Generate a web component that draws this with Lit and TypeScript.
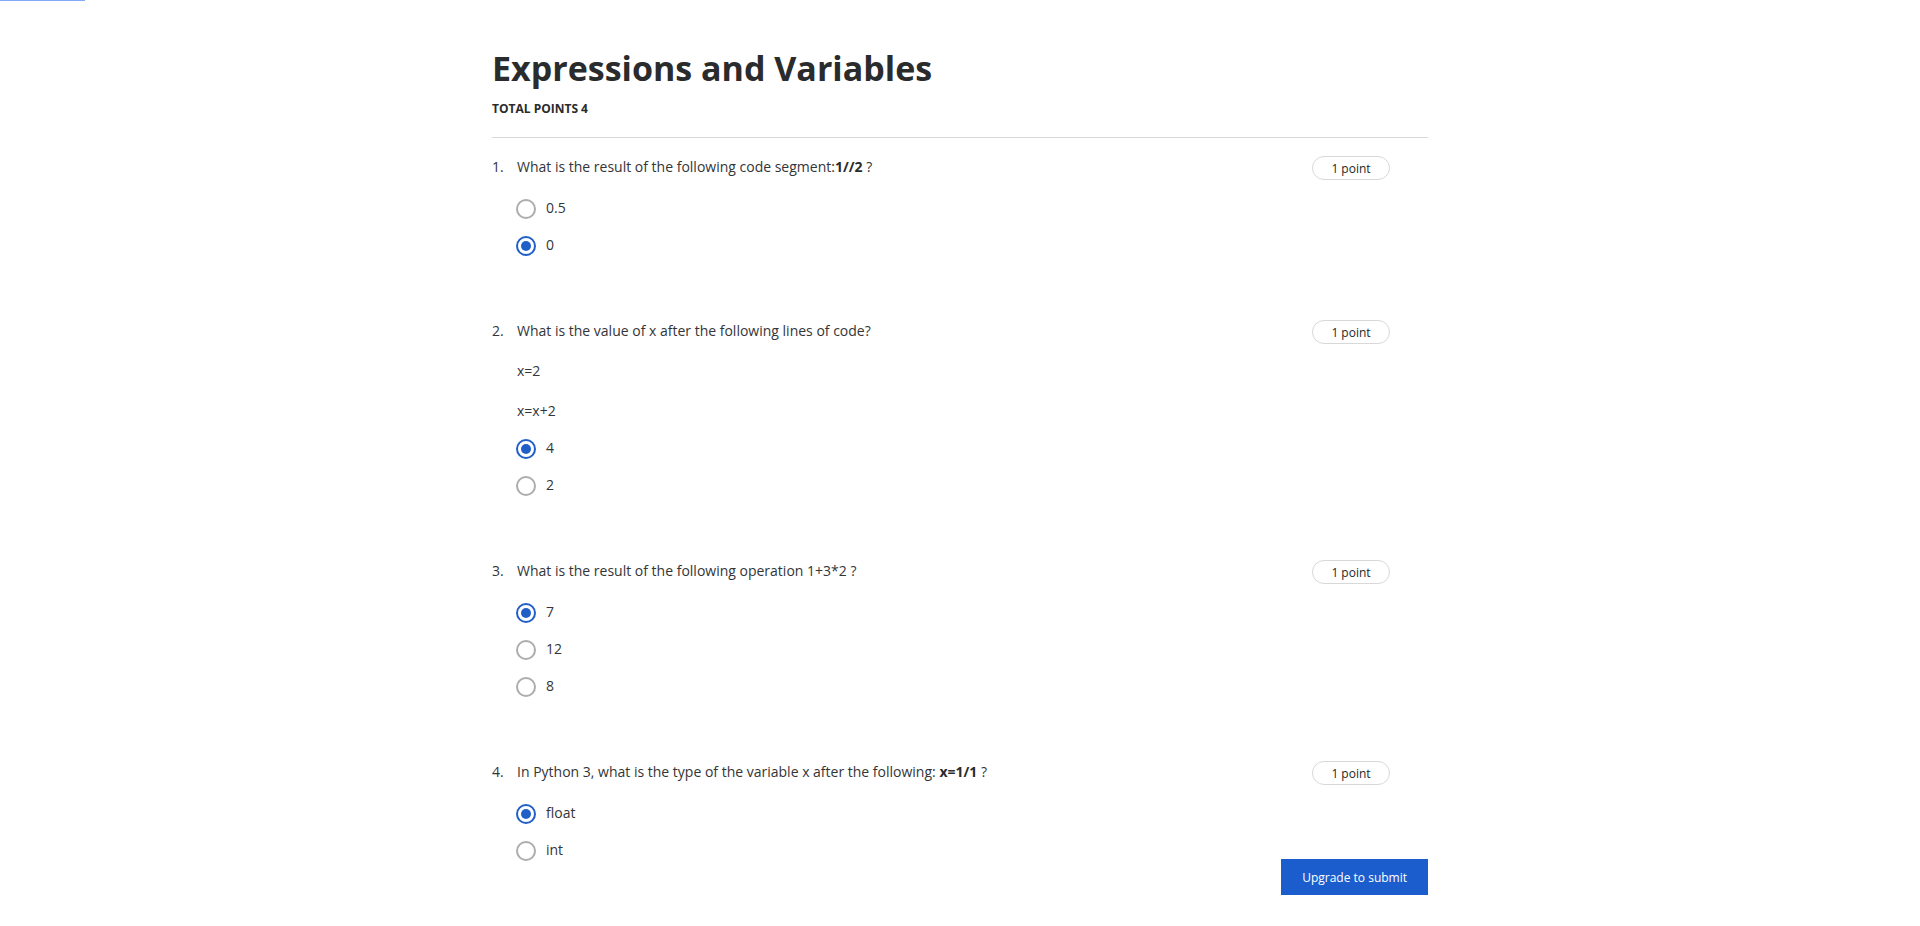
import { LitElement, html, css, TemplateResult } from "lit";
import { customElement, property, state } from "lit/decorators.js";
import { classMap } from "lit/directives/class-map.js";

interface Question {
  prompt: TemplateResult[];
  options: string[];
  selected: number;
}

@customElement("quiz-question")
class QuizQuestion extends LitElement {
  static styles = css`
    :host {
      display: block;
    }
    .question {
      display: grid;
      grid-template-columns: 24px minmax(0, 1fr) auto;
      padding: 0 38px 0 0;
      font-size: 14px;
      line-height: 22px;
      color: #333537;
    }
    .prompt {
      display: grid;
      gap: 18px;
      padding: 0 16px 0 1px;
    }
    .prompt p {
      margin: 0;
    }
    .prompt b {
      font-weight: 700;
      color: #2a2b2d;
    }
    .points {
      box-sizing: border-box;
      min-width: 78px;
      height: 24px;
      padding: 0 16px;
      border: 1px solid #d8d8d8;
      border-radius: 12px;
      font-size: 12px;
      line-height: 23px;
      text-align: center;
      color: #1f1f1f;
    }
    .options {
      grid-column: 2;
      display: grid;
      justify-items: start;
      gap: 17px;
      margin-top: 19px;
    }
    .options.compact {
      margin-top: 17px;
    }
    .option {
      display: flex;
      gap: 10px;
      line-height: 18px;
      cursor: pointer;
    }
    .radio {
      appearance: none;
      box-sizing: border-box;
      display: grid;
      place-content: center;
      width: 20px;
      height: 20px;
      margin: 0;
      border: 2px solid #adadad;
      border-radius: 50%;
      cursor: pointer;
    }
    .radio:checked {
      border-color: #205fc8;
    }
    .radio:checked::before {
      content: "";
      width: 10px;
      height: 10px;
      border-radius: 50%;
      background: #205fc8;
    }
  `;

  @property({ type: Number }) number = 1;
  @property({ attribute: false }) question!: Question;
  @state() private choice = -1;

  willUpdate() {
    if (this.choice < 0) this.choice = this.question.selected;
  }

  render() {
    const { prompt, options } = this.question;
    return html`
      <div class="question" role="radiogroup" aria-labelledby="prompt">
        <span>${this.number}.</span>
        <div class="prompt" id="prompt">${prompt.map((line) => html`<p>${line}</p>`)}</div>
        <span class="points">1 point</span>
        <div class=${classMap({ options: true, compact: prompt.length > 1 })}>
          ${options.map(
            (text, i) => html`
              <label class="option">
                <input
                  class="radio"
                  type="radio"
                  name="answer"
                  .checked=${this.choice === i}
                  @change=${() => (this.choice = i)}
                />
                <span>${text}</span>
              </label>
            `
          )}
        </div>
      </div>
    `;
  }
}

@customElement("app-root")
class AppRoot extends LitElement {
  static styles = css`
    :host {
      display: flex;
      flex-direction: column;
      min-height: 100vh;
      background: #fff;
      font-family: "Open Sans", "Noto Sans", sans-serif;
      color: #2a2b2d;
    }
    .progress {
      height: 1px;
    }
    .progress-fill {
      height: 100%;
      background: #86a8f8;
    }
    .page {
      flex: 1;
      display: grid;
      box-sizing: border-box;
      width: 100%;
      max-width: 984px;
      margin: 0 auto;
      padding: 43px 24px 31px;
    }
    .quiz,
    .actions {
      grid-area: 1 / 1;
    }
    .header {
      padding-bottom: 16px;
      margin-bottom: 18px;
      border-bottom: 1px solid #d8d8d8;
    }
    .title {
      margin: 0 0 5px;
      font-size: 34px;
      line-height: 48px;
      font-weight: 700;
    }
    .total {
      margin: 0;
      font-size: 12px;
      line-height: 24px;
      font-weight: 700;
      text-transform: uppercase;
    }
    .questions {
      display: grid;
      gap: 64px;
    }
    .actions {
      place-self: end;
    }
    .submit {
      display: block;
      height: 36px;
      padding: 0 21px;
      border: 0;
      background: #1c5dcd;
      font: inherit;
      font-size: 12px;
      color: #fff;
      cursor: pointer;
    }
  `;

  private progress = 85 / 1920;

  private questions: Question[] = [
    {
      prompt: [html`What is the result of the following code segment:<b>1//2</b> ?`],
      options: ["0.5", "0"],
      selected: 1,
    },
    {
      prompt: [
        html`What is the value of x after the following lines of code?`,
        html`x=2`,
        html`x=x+2`,
      ],
      options: ["4", "2"],
      selected: 0,
    },
    {
      prompt: [html`What is the result of the following operation 1+3*2 ?`],
      options: ["7", "12", "8"],
      selected: 0,
    },
    {
      prompt: [
        html`In Python 3, what is the type of the variable x after the following: <b>x=1/1</b> ?`,
      ],
      options: ["float", "int"],
      selected: 0,
    },
  ];

  render() {
    return html`
      <div class="progress">
        <div class="progress-fill" style="width: ${this.progress * 100}%"></div>
      </div>
      <main class="page">
        <div class="quiz">
          <header class="header">
            <h1 class="title">Expressions and Variables</h1>
            <p class="total">Total points 4</p>
          </header>
          <div class="questions">
            ${this.questions.map(
              (q, i) => html`<quiz-question .number=${i + 1} .question=${q}></quiz-question>`
            )}
          </div>
        </div>
        <div class="actions">
          <button class="submit" type="button">Upgrade to submit</button>
        </div>
      </main>
    `;
  }
}
